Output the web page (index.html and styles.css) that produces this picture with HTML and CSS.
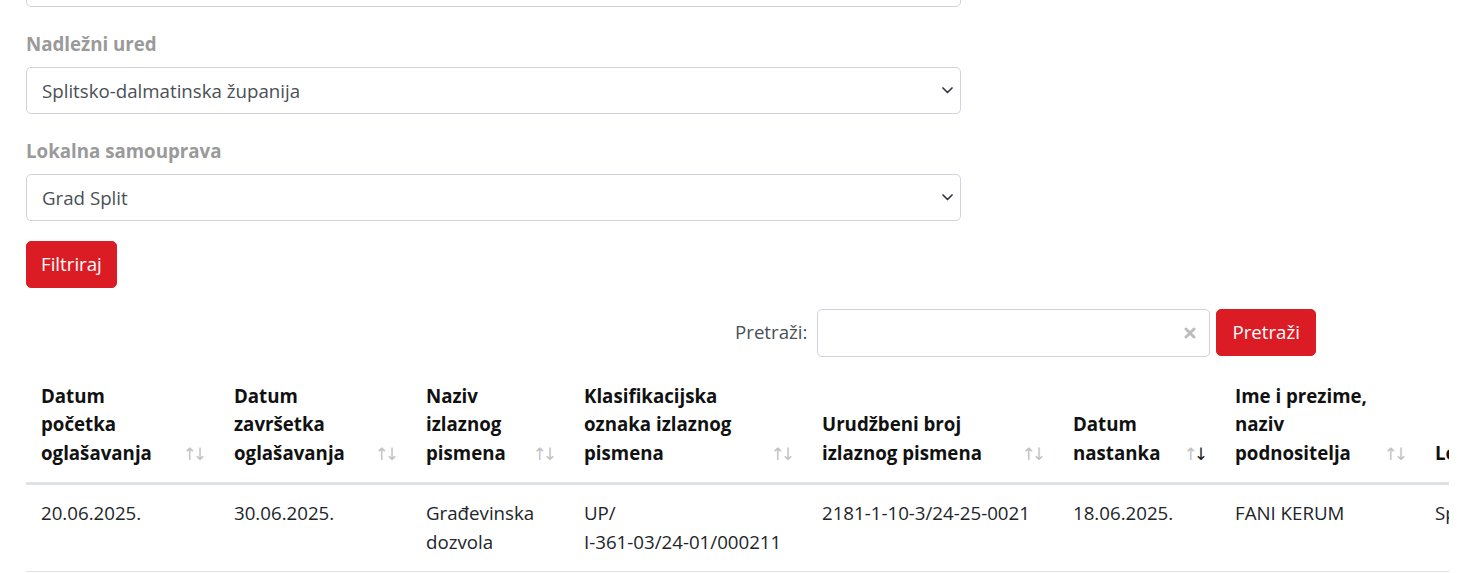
FILE: index.html
```html
<!DOCTYPE html>
<html lang="hr">
<head>
<meta charset="utf-8">
<title>Oglasna ploča</title>
<link rel="stylesheet" href="styles.css">
</head>
<body>
<div class="page">
  <div class="group group-top">
    <div class="select"></div>
  </div>
  <div class="group">
    <label class="lbl">Nadležni ured</label>
    <div class="select"><span>Splitsko-dalmatinska županija</span>
      <svg class="chev" width="11" height="7" viewBox="0 0 11 7"><path d="M1 1 L5.5 5.5 L10 1" fill="none" stroke="#343a40" stroke-width="1.7" stroke-linecap="round" stroke-linejoin="round"/></svg>
    </div>
  </div>
  <div class="group">
    <label class="lbl">Lokalna samouprava</label>
    <div class="select"><span>Grad Split</span>
      <svg class="chev" width="11" height="7" viewBox="0 0 11 7"><path d="M1 1 L5.5 5.5 L10 1" fill="none" stroke="#343a40" stroke-width="1.7" stroke-linecap="round" stroke-linejoin="round"/></svg>
    </div>
  </div>
  <button class="btn btn-filter">Filtriraj</button>

  <div class="search-row">
    <span class="search-lbl">Pretraži:</span>
    <div class="search-input">
      <svg class="clear" width="12" height="12" viewBox="0 0 12 12"><path d="M2 2 L10 10 M10 2 L2 10" stroke="#bdbdbd" stroke-width="3" stroke-linecap="round"/></svg>
    </div>
    <button class="btn">Pretraži</button>
  </div>

  <div class="table-wrap">
    <table class="tbl">
      <colgroup>
        <col class="c1"><col class="c2"><col class="c3"><col class="c4"><col class="c5"><col class="c6"><col class="c7"><col class="c8">
      </colgroup>
      <thead>
        <tr>
          <th><div class="th-in"><span>Datum početka oglašavanja</span><span class="sort"><i>↑</i><i>↓</i></span></div></th>
          <th><div class="th-in"><span>Datum završetka oglašavanja</span><span class="sort"><i>↑</i><i>↓</i></span></div></th>
          <th><div class="th-in"><span>Naziv izlaznog pismena</span><span class="sort"><i>↑</i><i>↓</i></span></div></th>
          <th><div class="th-in"><span>Klasifikacijska oznaka izlaznog pismena</span><span class="sort"><i>↑</i><i>↓</i></span></div></th>
          <th><div class="th-in"><span>Urudžbeni broj izlaznog pismena</span><span class="sort"><i>↑</i><i>↓</i></span></div></th>
          <th><div class="th-in"><span>Datum nastanka</span><span class="sort"><i>↑</i><i class="on">↓</i></span></div></th>
          <th><div class="th-in"><span>Ime i prezime, naziv podnositelja</span><span class="sort"><i>↑</i><i>↓</i></span></div></th>
          <th><div class="th-in"><span>Lokacija mjesta</span><span class="sort"><i>↑</i><i>↓</i></span></div></th>
        </tr>
      </thead>
      <tbody>
        <tr>
          <td>20.06.2025.</td>
          <td>30.06.2025.</td>
          <td>Građevinska dozvola</td>
          <td>UP/<br>I-361-03/24-01/000211</td>
          <td>2181-1-10-3/24-25-0021</td>
          <td>18.06.2025.</td>
          <td>FANI KERUM</td>
          <td>Split</td>
        </tr>
      </tbody>
    </table>
  </div>
</div>
</body>
</html>
```
FILE: styles.css
```css
* { box-sizing: border-box; }
html, body { margin: 0; padding: 0; background: #fff; }
body {
  font-family: "Open Sans", "Noto Sans", "DejaVu Sans", sans-serif;
  font-size: 18.7px;
  line-height: 28.8px;
  color: #212529;
  overflow: hidden;
}
.page {
  padding-left: 26px;
  width: 1460px;
}
.group { width: 935px; margin-bottom: 23px; }
.group-top { margin-top: -40px; }
.lbl {
  display: block;
  font-weight: 700;
  color: #9a9a9a;
  margin-bottom: 8px;
}
.select {
  height: 47px;
  border: 1px solid #ced4da;
  border-radius: 5px;
  display: flex;
  align-items: center;
  justify-content: space-between;
  padding: 3px 7px 0 15px;
  color: #495057;
}
.chev { display: block; margin-top: -2px; }
.btn {
  font-family: inherit;
  font-size: 18.7px;
  line-height: 28.8px;
  background: #dc1c24;
  color: #fff;
  border: 1px solid #dc1c24;
  border-radius: 5px;
  padding: 8px 14px;
  height: 47px;
  cursor: pointer;
}
.btn-filter { margin-top: -3px; display: block; }
.search-row {
  width: 1290px;
  display: flex;
  justify-content: flex-end;
  align-items: center;
  margin-top: 21px;
}
.search-lbl { color: #495057; margin-right: 10px; }
.search-input {
  width: 393px;
  height: 48px;
  border: 1px solid #ced4da;
  border-radius: 5px;
  display: flex;
  align-items: center;
  justify-content: flex-end;
  padding-right: 13px;
  margin-right: 6px;
}
.clear { display: block; }
.search-row .btn { height: 47px; padding: 8px 15px; }
.table-wrap {
  width: 1423px;
  overflow: hidden;
  margin-top: 11px;
}
.tbl {
  table-layout: fixed;
  border-collapse: collapse;
  width: 1614px;
}
.c1 { width: 193px; } .c2 { width: 192px; } .c3 { width: 158px; } .c4 { width: 238px; }
.c5 { width: 251px; } .c6 { width: 162px; } .c7 { width: 200px; } .c8 { width: 220px; }
.tbl th {
  vertical-align: bottom;
  text-align: left;
  font-weight: 700;
  color: #111;
  padding: 14px 12px 14px 15px;
  border-bottom: 3px solid #dee2e6;
}
.th-in {
  display: flex;
  align-items: flex-end;
  justify-content: space-between;
  gap: 8px;
}
.sort {
  flex: none;
  font-family: "DejaVu Sans", sans-serif;
  font-size: 17px;
  color: #c2c2c2;
  font-weight: 400;
  white-space: nowrap;
  line-height: 28px;
  letter-spacing: -4px;
  padding-right: 4px;
}
.sort i { font-style: normal; }
.sort i.on { color: #1a1a1a; }
.tbl td {
  vertical-align: top;
  padding: 14px 15px 14px 15px;
  border-bottom: 1px solid #dee2e6;
}
```
